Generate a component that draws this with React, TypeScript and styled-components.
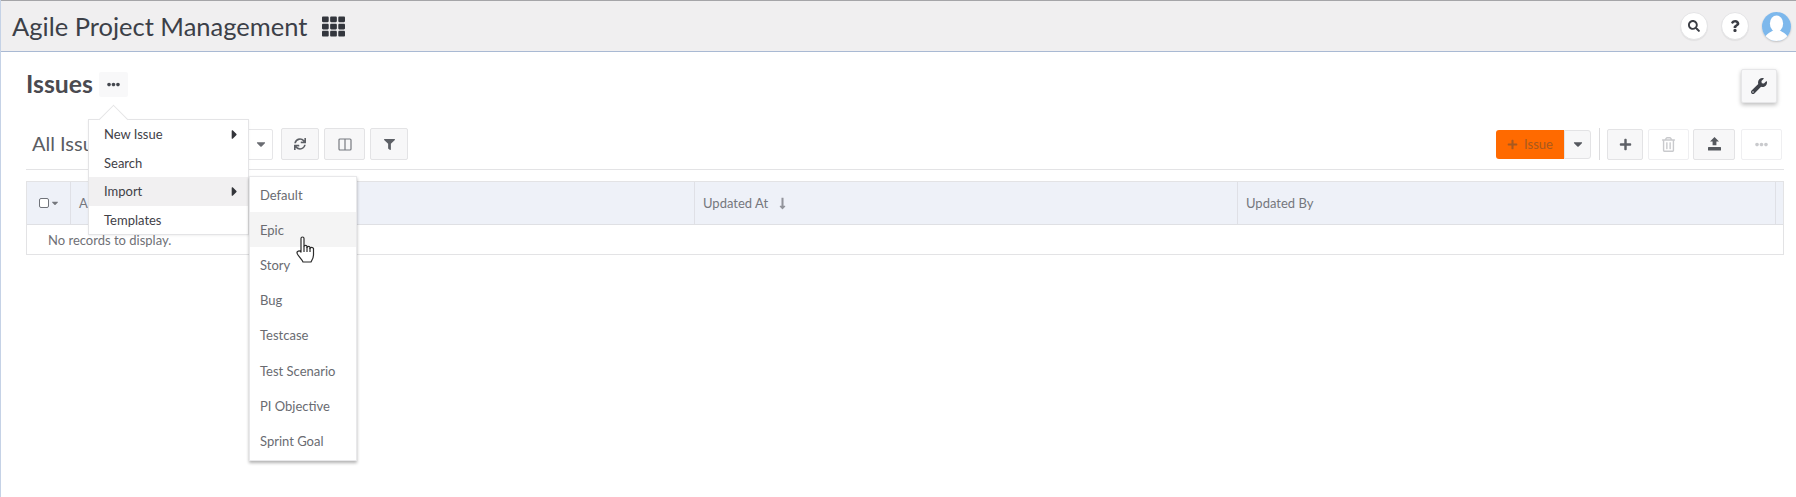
import React from "react";
import styled, { createGlobalStyle } from "styled-components";
import { FaTh, FaSearch, FaQuestion, FaWrench, FaSync, FaFilter, FaPlus, FaRegTrashAlt, FaEllipsisH, FaCaretDown, FaCaretRight, FaLongArrowAltDown } from "react-icons/fa";

const Global = createGlobalStyle`
  html, body { margin: 0; padding: 0; background: #fff; }
  body { font-family: Lato, "Open Sans", sans-serif; width: 1796px; height: 497px; overflow: hidden; }
  * { box-sizing: border-box; }
`;

const Page = styled.div`
  position: relative;
  width: 1796px;
  height: 497px;
  border-left: 1px solid #c5d2e6;
  display: flex;
  flex-direction: column;
`;

const TopBar = styled.header`
  height: 52px;
  flex: none;
  background: #f0eff0;
  border-top: 1px solid #a5a5a8;
  border-bottom: 1px solid #a9b9d3;
  display: flex;
  align-items: center;
  padding: 0 5px 0 11px;
`;

const AppTitle = styled.h1`
  margin: 0;
  font-size: 25.5px;
  font-weight: 400;
  color: #3c4048;
`;

const GridButton = styled.span`
  display: flex;
  margin-left: 15px;
  color: #33363d;
  font-size: 23px;
`;

const TopActions = styled.div`
  margin-left: auto;
  display: flex;
  align-items: center;
  gap: 13px;
`;

const RoundButton = styled.span`
  width: 28px;
  height: 28px;
  border-radius: 50%;
  background: #fff;
  border: 1px solid #e4e4e6;
  box-shadow: 0 1px 1px rgba(0, 0, 0, 0.06);
  display: flex;
  align-items: center;
  justify-content: center;
  color: #3a3d44;
  font-size: 12px;
`;

const Avatar = styled.span`
  display: flex;
  width: 29px;
  height: 29px;
  border-radius: 50%;
  overflow: hidden;
  box-shadow: 0 1px 2px rgba(0, 0, 0, 0.2);
`;

const Content = styled.main`
  flex: 1;
  padding: 17px 12px 0 25px;
  display: flex;
  flex-direction: column;
`;

const HeadingRow = styled.div`
  height: 34px;
  display: flex;
  align-items: center;
`;

const Heading = styled.h2`
  margin: 0 0 6px;
  font-size: 24.8px;
  font-weight: 700;
  color: #4a4a50;
`;

const DotsButton = styled.span`
  width: 29px;
  height: 25px;
  margin: 0 0 3px 6px;
  background: #f8f8f9;
  border-radius: 2px;
  display: flex;
  align-items: center;
  justify-content: center;
  color: #44474e;
  font-size: 13px;
`;

const WrenchButton = styled.span`
  margin-left: auto;
  margin-right: 7px;
  width: 36px;
  height: 34px;
  background: #f8f8f9;
  border: 1px solid #e6e6e8;
  border-radius: 2px;
  box-shadow: 0 2px 4px rgba(0, 0, 0, 0.25);
  display: flex;
  align-items: center;
  justify-content: center;
  color: #3f4249;
  font-size: 16px;
`;

const Toolbar = styled.div`
  margin-top: 25px;
  height: 42px;
  padding: 0 2px 9px 6px;
  border-bottom: 1px solid #e3e3e5;
  display: flex;
  align-items: center;
`;

const ListTitle = styled.span`
  font-size: 20px;
  color: #5b5d63;
  width: 208px;
  margin-bottom: 3px;
`;

const ViewCaret = styled.span`
  width: 33px;
  height: 31px;
  padding-left: 9px;
  border: 1px solid #e6e6e8;
  border-radius: 2px;
  display: flex;
  align-items: center;
  justify-content: center;
  color: #6a6c72;
  font-size: 14px;
  margin-right: 8px;
`;

const ToolButton = styled.span<{ $w: number; $h?: number; $faded?: boolean; $gap?: number; $icon?: number }>`
  width: ${(p) => p.$w}px;
  height: ${(p) => p.$h ?? 31}px;
  margin-right: ${(p) => p.$gap ?? 5}px;
  background: ${(p) => (p.$faded ? "#fff" : "#f7f7f8")};
  border: 1px solid ${(p) => (p.$faded ? "#efeff1" : "#e3e3e5")};
  border-radius: 2px;
  display: flex;
  align-items: center;
  justify-content: center;
  color: ${(p) => (p.$faded ? "#c9cacd" : "#5d6066")};
  font-size: ${(p) => p.$icon ?? 12}px;
`;

const Spacer = styled.span`
  flex: 1;
`;

const PrimaryButton = styled.span`
  width: 68px;
  height: 29px;
  background: #ff6a00;
  border-radius: 3px 0 0 3px;
  display: flex;
  align-items: center;
  justify-content: center;
  gap: 6px;
  color: #a8591f;
  font-size: 13px;
`;

const PlusMark = styled.span`
  display: flex;
  color: #a8591f;
  font-size: 11px;
`;

const PrimaryCaret = styled.span`
  width: 27px;
  height: 29px;
  background: #f7f7f8;
  border: 1px solid #e3e3e5;
  border-radius: 0 3px 3px 0;
  display: flex;
  align-items: center;
  justify-content: center;
  color: #55585e;
  font-size: 14px;
`;

const Separator = styled.span`
  width: 1px;
  height: 32px;
  background: #dcdcde;
  margin: 0 7px 0 8px;
`;

const Table = styled.div`
  margin-top: 11px;
  height: 74px;
  border: 1px solid #e3e3e5;
  display: flex;
  flex-direction: column;
`;

const HeaderRow = styled.div`
  height: 43px;
  flex: none;
  background: #eef1f8;
  border-bottom: 1px solid #dfe0e4;
  display: grid;
  grid-template-columns: 44px 624px 543px 538px 1fr;
`;

const HeaderCell = styled.div`
  display: flex;
  align-items: center;
  gap: 8px;
  padding-left: 8px;
  font-size: 13px;
  color: #75777d;
  border-right: 1px solid #dfe0e6;
  &:last-child { border-right: 0; }
`;

const SortMark = styled.span`
  display: flex;
  color: #92949b;
`;

const CheckCell = styled(HeaderCell)`
  padding-left: 12px;
  gap: 1px;
  font-size: 10px;
`;

const CheckBox = styled.span`
  width: 10px;
  height: 10px;
  border: 1px solid #70737a;
  border-radius: 2px;
  background: #fff;
`;

const EmptyRow = styled.div`
  flex: 1;
  display: flex;
  align-items: center;
  padding-left: 21px;
  font-size: 13px;
  color: #6f7076;
`;

const Arrow = styled.span`
  position: absolute;
  left: 14px;
  top: -11px;
  width: 21px;
  height: 21px;
  background: #fff;
  border-left: 1px solid #e4e4e6;
  border-top: 1px solid #e4e4e6;
  transform: rotate(45deg);
`;

const Menu = styled.ul`
  position: absolute;
  left: 87px;
  top: 119px;
  width: 161px;
  height: 116px;
  margin: 0;
  padding: 0;
  list-style: none;
  background: #fff;
  border: 1px solid #e4e4e6;
  box-shadow: 0 1px 2px rgba(0, 0, 0, 0.06);
  z-index: 2;
`;

const MenuItem = styled.li<{ $active?: boolean }>`
  position: relative;
  height: 28.5px;
  padding: 0 6px 0 15px;
  display: flex;
  align-items: center;
  justify-content: space-between;
  font-size: 13px;
  color: #3f4147;
  background: ${(p) => (p.$active ? "#f1f0f1" : "transparent")};
`;

const ItemArrow = styled.span`
  display: flex;
  font-size: 15px;
  color: #33353a;
`;

const SubMenu = styled.ul`
  position: absolute;
  left: 248px;
  top: 176px;
  width: 108px;
  height: 285px;
  margin: 0;
  padding: 0;
  list-style: none;
  background: #fff;
  border: 1px solid #e8e8ea;
  box-shadow: 0 2px 3px rgba(0, 0, 0, 0.3);
  z-index: 2;
`;

const SubItem = styled.li<{ $active?: boolean }>`
  height: 35.2px;
  padding-left: 10px;
  display: flex;
  align-items: center;
  font-size: 13px;
  color: #696b71;
  background: ${(p) => (p.$active ? "#f4f4f4" : "transparent")};
`;

const Cursor = styled.span`
  position: absolute;
  left: 295px;
  top: 236px;
  display: flex;
  z-index: 4;
`;

const HandCursor = () => (
  <svg width="19" height="27" viewBox="0 0 19 27" fill="#fff" stroke="#2b2b2b" strokeWidth="1.2" strokeLinejoin="round">
    <path d="M5 2.5 C5 .5 8 .5 8 2.5 V10.5 C8 9 11 9 11 10.5 V11.5 C11 10 14 10 14 11.5 V12.5 C14 11 17 11 17.5 12.5 V19 C17.5 22 16 24 15 26 H7 C6 23.5 1.5 19.5 1 17 C.7 15 3.5 14.2 5 16 Z" />
    <path d="M8 10.5 V16 M11 11 V16 M14 12 V16" fill="none" />
  </svg>
);

const Columns = () => (
  <svg width="14" height="13" viewBox="0 0 14 13" fill="none" stroke="#777a80" strokeWidth="1.2">
    <rect x="1" y="1" width="12" height="11" rx="1" />
    <path d="M7 1v11" />
  </svg>
);

const Upload = () => (
  <svg width="15" height="14" viewBox="0 0 15 14" fill="#55585e">
    <path d="M7.5 0 L12 4.6 H9.4 V8.2 H5.6 V4.6 H3 Z" />
    <rect x="1" y="10" width="13" height="3.6" rx="0.5" />
  </svg>
);

const AvatarArt = () => (
  <svg width="29" height="29" viewBox="0 0 29 29">
    <rect width="29" height="29" fill="#7db8ec" />
    <ellipse cx="14.5" cy="11.5" rx="6.6" ry="8" fill="#fff" />
    <path d="M2 29 C3 21 9 20.5 11.5 18 h6 C20 20.5 26 21 27 29 Z" fill="#fff" />
  </svg>
);

const menuItems = [
  { label: "New Issue", more: true },
  { label: "Search" },
  { label: "Import", more: true, active: true },
  { label: "Templates" },
];

const subItems = ["Default", "Epic", "Story", "Bug", "Testcase", "Test Scenario", "PI Objective", "Sprint Goal"];

export default function App() {
  return (
    <Page>
      <Global />
      <TopBar>
        <AppTitle>Agile Project Management</AppTitle>
        <GridButton><FaTh /></GridButton>
        <TopActions>
          <RoundButton><FaSearch /></RoundButton>
          <RoundButton><FaQuestion /></RoundButton>
          <Avatar><AvatarArt /></Avatar>
        </TopActions>
      </TopBar>
      <Content>
        <HeadingRow>
          <Heading>Issues</Heading>
          <DotsButton><FaEllipsisH /></DotsButton>
          <WrenchButton><FaWrench /></WrenchButton>
        </HeadingRow>
        <Toolbar>
          <ListTitle>All Issues</ListTitle>
          <ViewCaret><FaCaretDown /></ViewCaret>
          <ToolButton $w={38} $h={32}><FaSync /></ToolButton>
          <ToolButton $w={41} $h={32}><Columns /></ToolButton>
          <ToolButton $w={38} $h={32} $icon={11}><FaFilter /></ToolButton>
          <Spacer />
          <PrimaryButton><PlusMark><FaPlus /></PlusMark>Issue</PrimaryButton>
          <PrimaryCaret><FaCaretDown /></PrimaryCaret>
          <Separator />
          <ToolButton $w={36} $icon={13}><FaPlus /></ToolButton>
          <ToolButton $w={41} $faded $gap={4} $icon={15}><FaRegTrashAlt /></ToolButton>
          <ToolButton $w={42} $gap={6}><Upload /></ToolButton>
          <ToolButton $w={41} $faded $gap={0} $icon={13}><FaEllipsisH /></ToolButton>
        </Toolbar>
        <Table>
          <HeaderRow>
            <CheckCell><CheckBox /><FaCaretDown /></CheckCell>
            <HeaderCell>Assignee</HeaderCell>
            <HeaderCell>Updated At <SortMark><FaLongArrowAltDown /></SortMark></HeaderCell>
            <HeaderCell>Updated By</HeaderCell>
            <HeaderCell />
          </HeaderRow>
          <EmptyRow>No records to display.</EmptyRow>
        </Table>
      </Content>
      <Menu>
        <Arrow />
        {menuItems.map((m) => (
          <MenuItem key={m.label} $active={m.active}>
            {m.label}
            {m.more && <ItemArrow><FaCaretRight /></ItemArrow>}
          </MenuItem>
        ))}
      </Menu>
      <SubMenu>
        {subItems.map((s) => (
          <SubItem key={s} $active={s === "Epic"}>{s}</SubItem>
        ))}
      </SubMenu>
      <Cursor><HandCursor /></Cursor>
    </Page>
  );
}
